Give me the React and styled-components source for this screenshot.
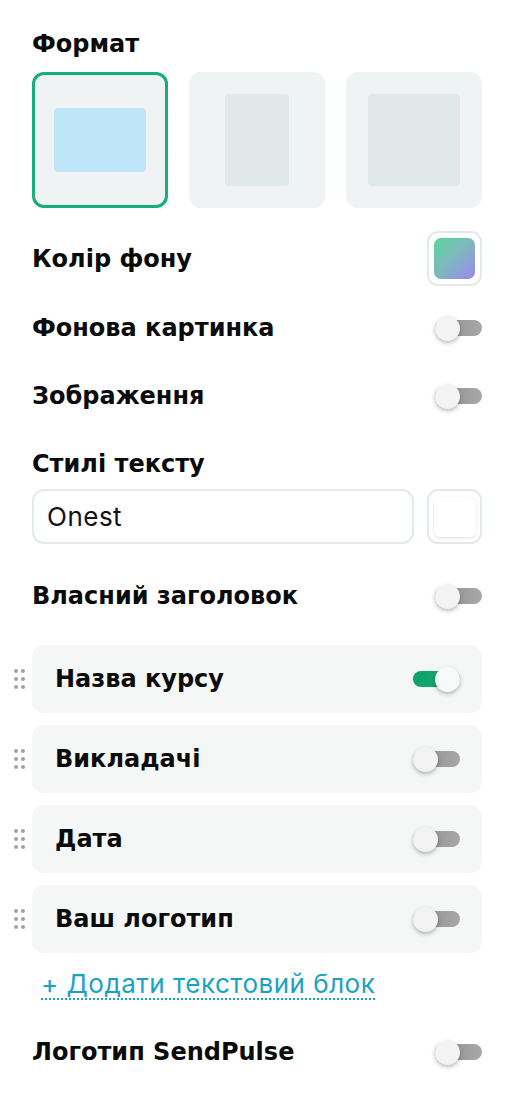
import React from "react";
import styled, { createGlobalStyle } from "styled-components";

const Global = createGlobalStyle`
  html, body { margin: 0; padding: 0; background: #ffffff; }
  body { font-family: Inter, "Noto Sans", sans-serif; color: #0d0d0d; }
  * { box-sizing: border-box; }
`;

const Panel = styled.div`
  width: 450px;
  margin-left: 32px;
  padding-top: 30px;
  display: flex;
  flex-direction: column;
`;

const Title = styled.div`
  font-family: "DejaVu Sans", Inter, sans-serif;
  font-size: 24px;
  font-weight: 700;
  line-height: 28px;
  letter-spacing: 0;
  color: #0b0b0b;
  margin-top: ${(p) => p.$mt || 0}px;
`;

const Formats = styled.div`
  display: grid;
  grid-template-columns: repeat(3, 136px);
  justify-content: space-between;
  margin-top: 14px;
`;

const FormatCard = styled.div`
  height: 136px;
  border-radius: 12px;
  background: #eff3f4;
  border: 3px solid ${(p) => (p.$active ? "#15b07a" : "transparent")};
  display: flex;
  align-items: center;
  justify-content: center;
`;

const FormatShape = styled.div`
  width: ${(p) => p.$w}px;
  height: ${(p) => p.$h}px;
  border-radius: 4px;
  background: ${(p) => (p.$active ? "#bee6f8" : "#e0e8e8")};
`;

const Row = styled.div`
  display: flex;
  align-items: center;
  justify-content: space-between;
  height: ${(p) => p.$h || 68}px;
  margin-top: ${(p) => p.$mt || 0}px;
`;

const SwatchBox = styled.div`
  width: 55px;
  height: 55px;
  border-radius: 11px;
  border: 2px solid #e3eaea;
  display: flex;
  align-items: center;
  justify-content: center;
`;

const GradientSwatch = styled.div`
  width: 41px;
  height: 41px;
  border-radius: 7px;
  background: linear-gradient(135deg, #5bd69a 0%, #7fb7c0 50%, #9d86f2 100%);
`;

const WhiteSwatch = styled.div`
  width: 42px;
  height: 40px;
  border-radius: 6px;
  background: #ffffff;
  box-shadow: 0 1px 3px rgba(0, 0, 0, 0.12);
`;

const InputRow = styled.div`
  display: flex;
  gap: 13px;
  margin-top: 11px;
`;

const TextInput = styled.div`
  flex: 1;
  height: 55px;
  border-radius: 12px;
  border: 2px solid #e3eaea;
  display: flex;
  align-items: center;
  padding-left: 13px;
  font-size: 26px;
  font-weight: 400;
  letter-spacing: 0.5px;
  color: #111;
`;

const ToggleWrap = styled.div`
  position: relative;
  width: 47px;
  height: 25px;
  flex-shrink: 0;
`;

const Track = styled.div`
  position: absolute;
  left: 0;
  right: 0;
  top: 4px;
  height: 16px;
  border-radius: 8px;
  background: ${(p) =>
    p.$on
      ? "linear-gradient(90deg, #0f9f68, #17b07a)"
      : "linear-gradient(90deg, #8c8c8c, #a8a8a8)"};
`;

const Knob = styled.div`
  position: absolute;
  top: 0;
  ${(p) => (p.$on ? "right: 0;" : "left: 0;")}
  width: 25px;
  height: 25px;
  border-radius: 50%;
  background: ${(p) => (p.$on ? "#f6fbfa" : "#f3f3f3")};
  box-shadow: 0 2px 4px rgba(0, 0, 0, 0.28);
`;

const Toggle = ({ on }) => (
  <ToggleWrap>
    <Track $on={on} />
    <Knob $on={on} />
  </ToggleWrap>
);

const List = styled.div`
  display: flex;
  flex-direction: column;
  gap: 12px;
  margin-top: 15px;
  margin-left: -18px;
`;

const DragItem = styled.div`
  display: flex;
  align-items: center;
  gap: 7px;
`;

const Handle = styled.div`
  display: grid;
  grid-template-columns: repeat(2, 4px);
  grid-auto-rows: 4px;
  column-gap: 3px;
  row-gap: 4px;
  width: 11px;
`;

const Dot = styled.span`
  width: 4px;
  height: 4px;
  border-radius: 50%;
  background: #9aa6a6;
`;

const ItemCard = styled.div`
  flex: 1;
  height: 68px;
  border-radius: 12px;
  background: #f5f7f7;
  display: flex;
  align-items: center;
  justify-content: space-between;
  padding: 0 22px 0 23px;
`;

const AddLink = styled.a`
  align-self: flex-start;
  margin: 17px 0 0 9px;
  font-size: 26px;
  line-height: 28px;
  font-weight: 400;
  letter-spacing: 0.5px;
  color: #18a3c6;
  text-decoration: none;
  border-bottom: 2px dotted #18a3c6;
  cursor: pointer;
`;

const items = [
  { label: "Назва курсу", on: true },
  { label: "Викладачі", on: false },
  { label: "Дата", on: false },
  { label: "Ваш логотип", on: false },
];

export default function App() {
  return (
    <>
      <Global />
      <Panel>
        <Title>Формат</Title>
        <Formats>
          <FormatCard $active>
            <FormatShape $active $w={92} $h={64} />
          </FormatCard>
          <FormatCard>
            <FormatShape $w={64} $h={92} />
          </FormatCard>
          <FormatCard>
            <FormatShape $w={92} $h={92} />
          </FormatCard>
        </Formats>

        <Row $h={55} $mt={23}>
          <Title>Колір фону</Title>
          <SwatchBox>
            <GradientSwatch />
          </SwatchBox>
        </Row>

        <Row $mt={8}>
          <Title>Фонова картинка</Title>
          <Toggle />
        </Row>
        <Row>
          <Title>Зображення</Title>
          <Toggle />
        </Row>

        <Title $mt={20}>Стилі тексту</Title>
        <InputRow>
          <TextInput>Onest</TextInput>
          <SwatchBox>
            <WhiteSwatch />
          </SwatchBox>
        </InputRow>

        <Row $mt={18}>
          <Title>Власний заголовок</Title>
          <Toggle />
        </Row>

        <List>
          {items.map((it) => (
            <DragItem key={it.label}>
              <Handle>
                {Array.from({ length: 6 }).map((_, i) => (
                  <Dot key={i} />
                ))}
              </Handle>
              <ItemCard>
                <Title>{it.label}</Title>
                <Toggle on={it.on} />
              </ItemCard>
            </DragItem>
          ))}
        </List>

        <AddLink>+ Додати текстовий блок</AddLink>

        <Row $mt={18}>
          <Title>Логотип SendPulse</Title>
          <Toggle />
        </Row>
      </Panel>
    </>
  );
}
